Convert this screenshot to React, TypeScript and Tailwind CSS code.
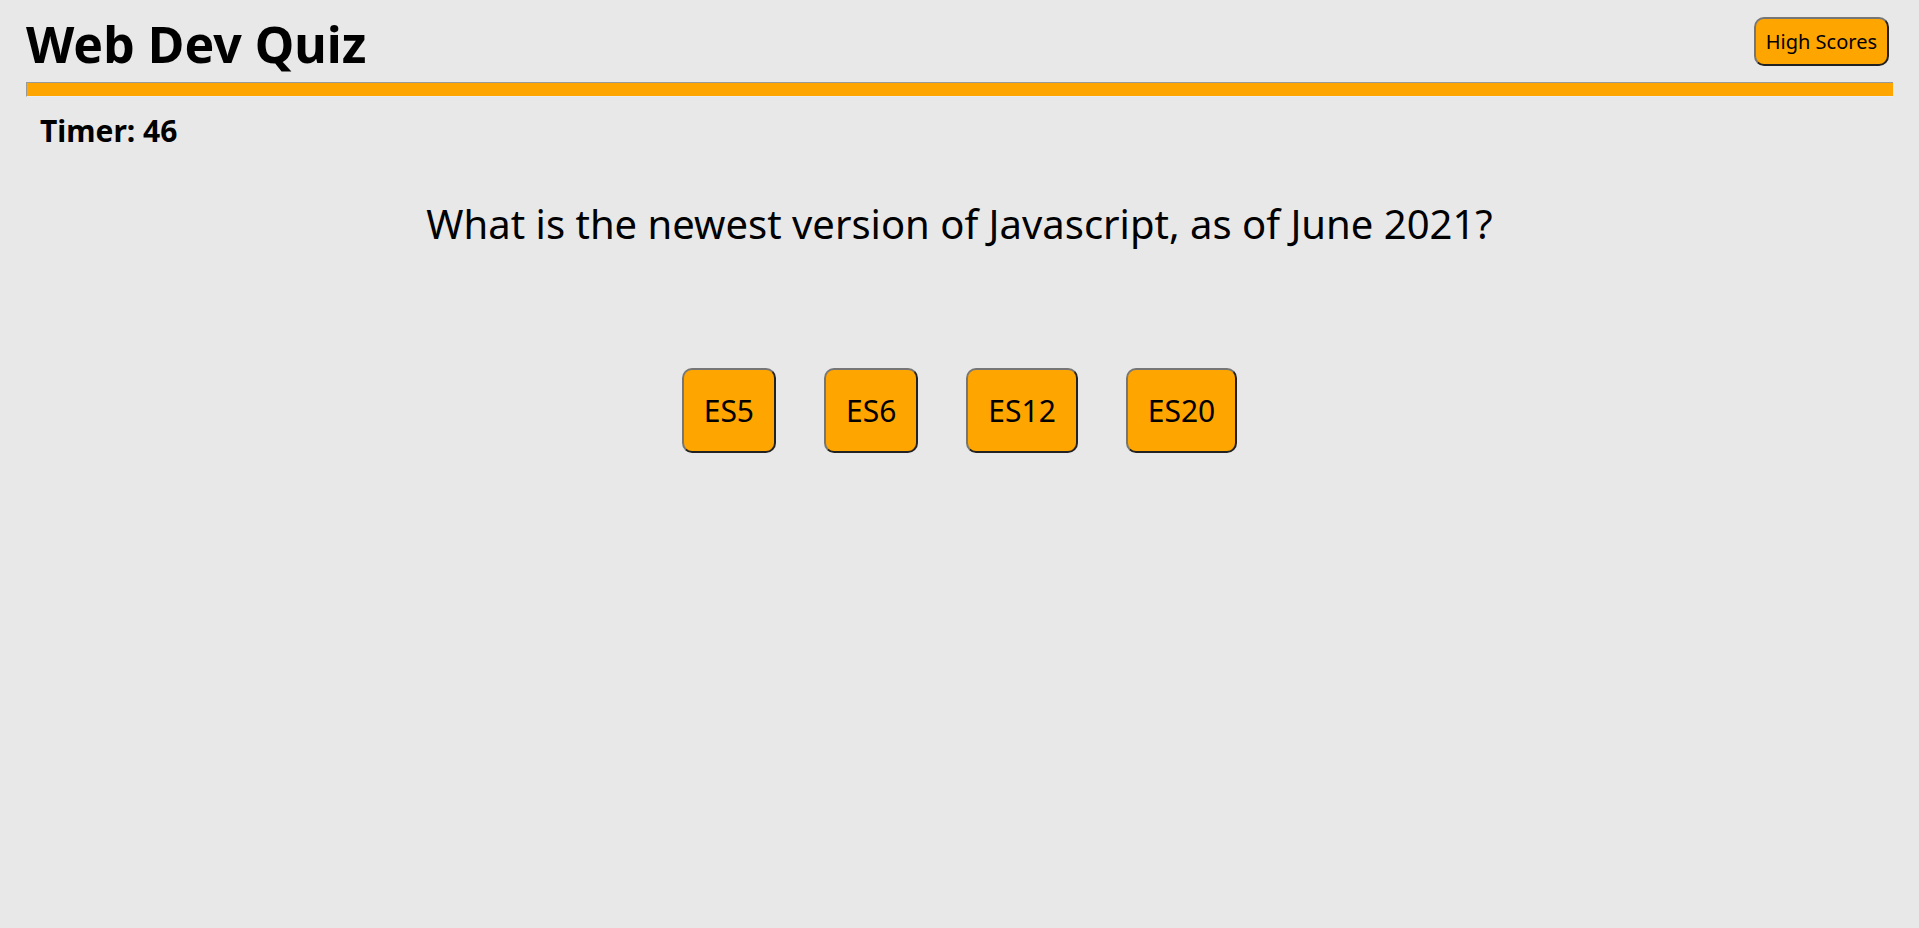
import React from "react";

const answers = ["ES5", "ES6", "ES12", "ES20"];

export default function App() {
  return (
    <div className="min-h-screen w-full bg-[#e8e8e8] text-black font-['Noto_Sans','Open_Sans',sans-serif]">
      <header className="flex items-start justify-between pl-[26px] pr-[30px] pt-[10px]">
        <h1 className="text-[50px] font-bold leading-[68px]">Web Dev Quiz</h1>
        <button className="mt-[7px] rounded-[10px] border-2 border-t-[#767676] border-l-[#767676] border-b-[#222222] border-r-[#222222] bg-[#ffa500] px-[10px] py-[9px] text-[20px] leading-[27px] text-black">
          High Scores
        </button>
      </header>
      <div className="mx-[26px] mt-[4px] h-[15px] border-t border-l border-b border-t-[#9a9a9a] border-l-[#9a9a9a] border-b-[#eeeeee] bg-[#ffa500]" />
      <div className="mt-[13px] pl-[40px] text-[30px] font-bold leading-[41px]">Timer: 46</div>
      <p className="mt-[46px] text-center text-[40px] leading-[54px]">
        What is the newest version of Javascript, as of June 2021?
      </p>
      <div className="mt-[117px] flex justify-center gap-[48px]">
        {answers.map((a) => (
          <button
            key={a}
            className="rounded-[10px] border-2 border-t-[#767676] border-l-[#767676] border-b-[#222222] border-r-[#222222] bg-[#ffa500] p-[20px] text-[30px] leading-[41px] text-black"
          >
            {a}
          </button>
        ))}
      </div>
    </div>
  );
}
